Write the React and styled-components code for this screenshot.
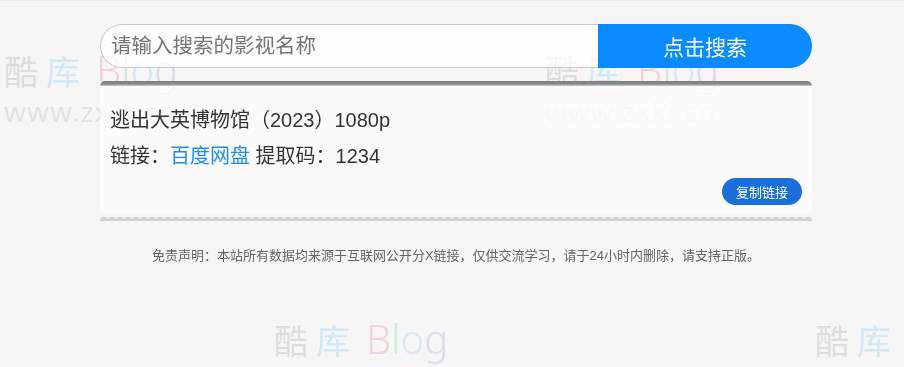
import React from "react";
import styled, { createGlobalStyle } from "styled-components";

const GlobalStyle = createGlobalStyle`
  html, body {
    margin: 0;
    padding: 0;
  }
  body {
    background: #f6f6f6;
    border-top: 1px solid #e9e9e9;
    font-family: "Liberation Sans", "Noto Sans CJK SC", sans-serif;
    color: #333;
    overflow: hidden;
  }
`;

const Page = styled.main`
  position: relative;
  z-index: 1;
  width: 712px;
  margin: 0 auto;
  padding: 23px 0 0 8px;
`;

const SearchBar = styled.form`
  display: flex;
  height: 44px;
  margin: 0;
`;

const SearchInput = styled.input`
  flex: 1;
  min-width: 0;
  box-sizing: border-box;
  height: 44px;
  padding: 0 10px;
  border: 1px solid #c9c9c9;
  border-right: none;
  border-radius: 22px 0 0 22px;
  background: rgba(255, 255, 255, 0.72);
  font-family: "Liberation Sans", "Noto Sans CJK SC", sans-serif;
  font-size: 20.5px;
  color: #333;
  outline: none;

  &::placeholder {
    color: #757575;
  }
`;

const SearchButton = styled.button`
  width: 214px;
  height: 44px;
  border: none;
  border-radius: 0 22px 22px 0;
  background: #0a8bff;
  color: #fff;
  font-family: "Liberation Sans", "Noto Sans CJK SC", sans-serif;
  font-size: 21px;
  cursor: pointer;
`;

const Card = styled.section`
  margin-top: 13px;
  background: rgba(252, 252, 252, 0.8);
`;

const CardTop = styled.div`
  height: 5px;
  border-radius: 5px 5px 0 0;
  background: linear-gradient(#7c7c7c, #8a8a8a 60%, #cfcfcf);
`;

const CardBody = styled.div`
  padding: 16px 10px 9px 10px;
  display: flex;
  flex-direction: column;
`;

const Title = styled.h2`
  margin: 0;
  font-size: 20px;
  font-weight: normal;
  line-height: 36px;
  color: #333;
`;

const LinkLine = styled.p`
  margin: 0;
  font-size: 20px;
  line-height: 36px;
  color: #333;
`;

const PanLink = styled.a`
  color: #1a8ff0;
  text-decoration: none;
`;

const Actions = styled.div`
  display: flex;
  justify-content: flex-end;
  margin-top: 4px;
`;

const CopyButton = styled.button`
  width: 80px;
  height: 27px;
  border: none;
  border-radius: 14px;
  background: #1a6fdb;
  color: #fff;
  font-family: "Liberation Sans", "Noto Sans CJK SC", sans-serif;
  font-size: 13px;
  padding: 0;
  cursor: pointer;
`;

const Scallop = styled.div`
  height: 7px;
  background-color: #f6f6f6;
  background-image: radial-gradient(circle at 4px 7px, #d2d2d2 4px, transparent 4.6px);
  background-size: 8px 7px;
  background-repeat: repeat-x;
`;

const Disclaimer = styled.p`
  margin: 26px 0 0;
  text-align: center;
  font-size: 13px;
  line-height: 18px;
  color: #666;
`;

const WatermarkLayer = styled.div`
  position: fixed;
  inset: 0;
  pointer-events: none;
  overflow: hidden;
  z-index: 0;
`;

const Mark = styled.div`
  position: absolute;
  left: ${(p) => p.$x}px;
  top: ${(p) => p.$y}px;
  display: flex;
  flex-direction: column;
`;

const Logo = styled.div`
  display: flex;
  align-items: baseline;
  white-space: nowrap;
`;

const Han = styled.span`
  font-family: "Noto Sans CJK SC", sans-serif;
  font-size: 34px;
  line-height: 40px;
  color: ${(p) => p.$color};
  margin-right: ${(p) => p.$gap}px;
`;

const Latin = styled.span`
  font-family: "Noto Sans", sans-serif;
  font-weight: 300;
  font-size: 40px;
  line-height: 40px;
  color: ${(p) => p.$color};
`;

const Url = styled.div`
  font-family: "Noto Sans", sans-serif;
  font-size: 28px;
  line-height: 36px;
  letter-spacing: 1px;
  color: #e2e2e2;
  margin-top: 2px;
`;

const marks = [
  { x: 4, y: 50, url: true },
  { x: 545, y: 50, url: true },
  { x: 274, y: 319, url: false },
  { x: 815, y: 319, url: false },
];

const Watermark = ({ x, y, url }) => (
  <Mark $x={x} $y={y}>
    <Logo>
      <Han $color="#dddddd" $gap={8}>酷</Han>
      <Han $color="#d2e8f6" $gap={16}>库</Han>
      <Latin $color="#f4d2d2">B</Latin>
      <Latin $color="#d0ecd0">l</Latin>
      <Latin $color="#d4e8f5">o</Latin>
      <Latin $color="#dcdcec">g</Latin>
    </Logo>
    {url && <Url>www.zxki.cn</Url>}
  </Mark>
);

export default function App() {
  return (
    <>
      <GlobalStyle />
      <WatermarkLayer>
        {marks.map((m, i) => (
          <Watermark key={i} {...m} />
        ))}
      </WatermarkLayer>

      <Page>
        <SearchBar onSubmit={(e) => e.preventDefault()}>
          <SearchInput placeholder="请输入搜索的影视名称" />
          <SearchButton type="submit">点击搜索</SearchButton>
        </SearchBar>

        <Card>
          <CardTop />
          <CardBody>
            <Title>逃出大英博物馆（2023）1080p</Title>
            <LinkLine>
              链接：<PanLink href="#">百度网盘</PanLink> 提取码：1234
            </LinkLine>
            <Actions>
              <CopyButton>复制链接</CopyButton>
            </Actions>
          </CardBody>
          <Scallop />
        </Card>

        <Disclaimer>
          免责声明：本站所有数据均来源于互联网公开分X链接，仅供交流学习，请于24小时内删除，请支持正版。
        </Disclaimer>
      </Page>
    </>
  );
}
